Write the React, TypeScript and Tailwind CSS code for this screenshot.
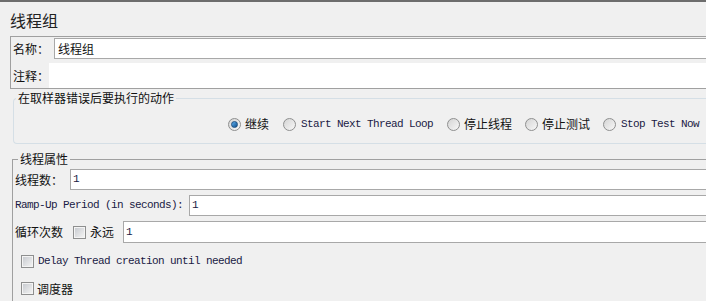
import React from 'react';

const cjk = "font-['Noto_Sans_CJK_SC',sans-serif]";
const mono = "font-['Liberation_Mono',monospace] text-[11px] tracking-[-0.6px] text-[#1a1a44]";

const Radio: React.FC<{ checked?: boolean }> = ({ checked }) => (
  <span className="w-[13px] h-[13px] rounded-full border border-[#8e8f8f] bg-gradient-to-br from-[#d4d4d4] to-[#f8f8f8] flex items-center justify-center shrink-0">
    {checked && (
      <span className="w-[7px] h-[7px] rounded-full bg-gradient-to-br from-[#5fb2f0] to-[#0b4f8f] border border-[#1d4f80]" />
    )}
  </span>
);

const Checkbox: React.FC = () => (
  <span className="w-[13px] h-[13px] border border-[#8e8f8f] bg-[#f4f4f4] p-[1px] shrink-0 flex">
    <span className="flex-1 bg-gradient-to-br from-[#c9ccd1] to-[#f2f2f2]" />
  </span>
);

const Field: React.FC<{ value: string; className?: string }> = ({ value, className }) => (
  <div className={`flex-1 h-[21px] border border-r-0 border-[#a8a8a8] bg-white pl-[2px] flex items-center ${className ?? ''}`}>
    {value}
  </div>
);

export default function App() {
  return (
    <div className={`w-[706px] h-[301px] overflow-hidden bg-[#f0f0f0] text-[#111] ${cjk}`}>
      <div className="h-[2px] bg-[#6d6d6d]" />
      <div className="pl-[10px]">
        <div className="mt-[8px] h-[20px] text-[16px] leading-[20px] text-[#222]">线程组</div>

        {/* name / comment */}
        <div className="mt-[6px] border border-r-0 border-[#a0a0a0] pl-[1px] pt-[1px] text-[12px]">
          <div className="flex items-center h-[21px]">
            <span className="w-[42px] pl-[1px]">名称：</span>
            <Field value="线程组" className="pl-[3px] text-[12px]" />
          </div>
          <div className="mt-[4px] flex h-[25px]">
            <span className="w-[37px] pl-[1px] flex items-center">注释：</span>
            <div className="flex-1 bg-white" />
          </div>
        </div>

        {/* on sampler error */}
        <fieldset className="ml-[3px] mt-[2px] border border-r-0 border-[#d5dfe6] rounded-l-[4px] h-[53px]">
          <legend className="ml-[2px] px-[2px] text-[12px] leading-[14px]">在取样器错误后要执行的动作</legend>
          <div className="mt-[11px] flex justify-end items-center h-[16px] pr-[7px] text-[12px]">
            <Radio checked />
            <span className="ml-[4px]">继续</span>
            <span className="ml-[14px]"><Radio /></span>
            <span className={`ml-[5px] ${mono}`}>Start Next Thread Loop</span>
            <span className="ml-[14px]"><Radio /></span>
            <span className="ml-[4px]">停止线程</span>
            <span className="ml-[13px]"><Radio /></span>
            <span className="ml-[4px]">停止测试</span>
            <span className="ml-[13px]"><Radio /></span>
            <span className={`ml-[5px] ${mono}`}>Stop Test Now</span>
          </div>
        </fieldset>

        {/* thread properties */}
        <fieldset className="ml-[2px] mt-[8px] border border-r-0 border-b-0 border-[#a0a0a0] h-[200px] pl-[2px] text-[12px]">
          <legend className="ml-[3px] px-[2px] text-[12px] leading-[14px]">线程属性</legend>
          <div className="mt-[3px] flex items-center">
            <span className="w-[55px]">线程数：</span>
            <Field value="1" className={mono} />
          </div>
          <div className="mt-[5px] flex items-center">
            <span className={`w-[174px] ${mono}`}>Ramp-Up Period (in seconds):</span>
            <Field value="1" className={mono} />
          </div>
          <div className="mt-[5px] flex items-center">
            <span className="w-[58px]">循环次数</span>
            <Checkbox />
            <span className="ml-[4px] w-[33px]">永远</span>
            <Field value="1" className={`h-[22px] ${mono}`} />
          </div>
          <div className="mt-[12px] ml-[6px] flex items-center h-[13px]">
            <Checkbox />
            <span className={`ml-[4px] ${mono}`}>Delay Thread creation until needed</span>
          </div>
          <div className="mt-[14px] ml-[6px] flex items-center h-[13px]">
            <Checkbox />
            <span className="ml-[3px]">调度器</span>
          </div>
        </fieldset>
      </div>
    </div>
  );
}
